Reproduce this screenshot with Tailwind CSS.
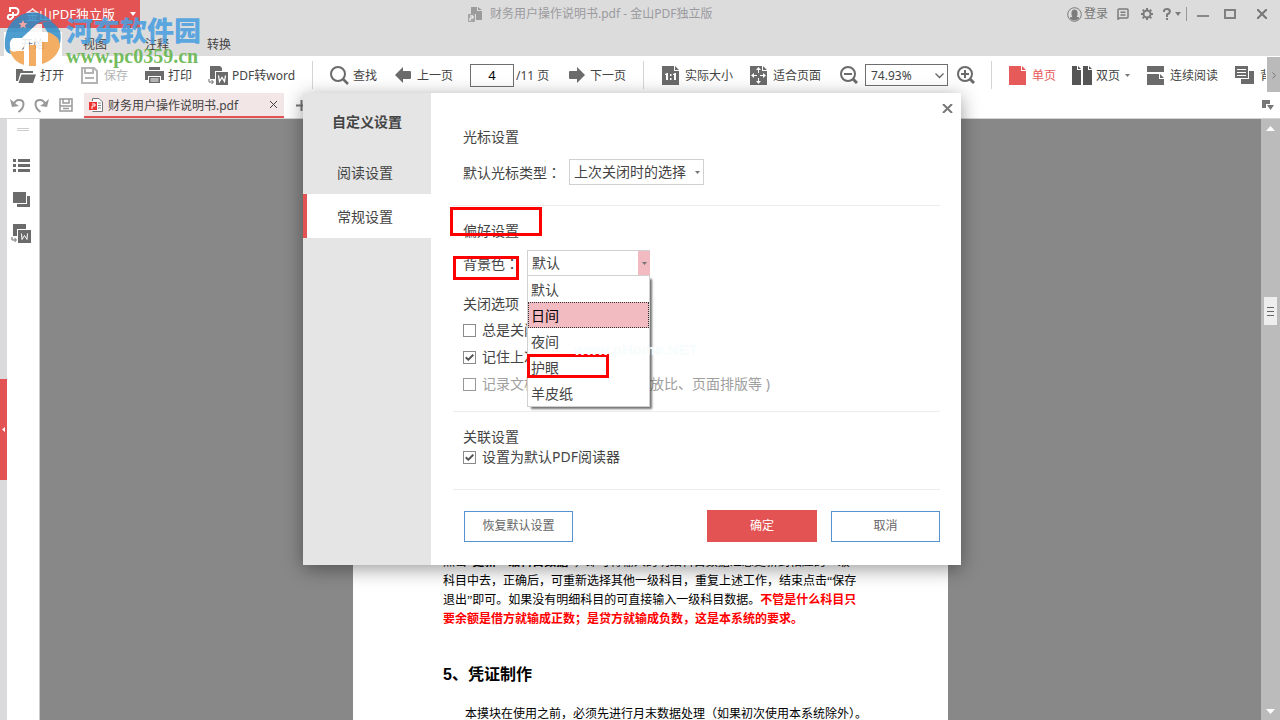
<!DOCTYPE html>
<html lang="zh-CN">
<head>
<meta charset="utf-8">
<meta name="viewport" content="width=device-width, initial-scale=1">
<title>财务用户操作说明书.pdf - 金山PDF独立版</title>
<script src="https://cdn.jsdelivr.net/npm/@tailwindcss/browser@4"></script>
</head>
<body class="relative flex h-screen flex-col overflow-hidden bg-[#888888] font-['Noto_Sans','Noto_Sans_CJK_SC',sans-serif] text-[12px] leading-4 text-[#444444]">

<!-- Title bar -->
<header class="shrink-0 bg-[#dcdcdc]">
  <div class="relative flex h-7 items-center justify-between">
    <button class="flex h-7 w-[140px] items-center bg-[#e35353] pl-[6px] text-[13px] text-white">
      <svg class="mr-[6px] size-[14px]" viewBox="0 0 14 14" fill="none" stroke="currentColor" stroke-width="2"><path d="M4 5V1h5a3.500 3.500 0 0 1 0 7H7v2M7 8H3a2 2 0 1 0 2 4l2-2V5"/></svg>
      <span>金山PDF独立版</span>
      <svg class="mr-1 ml-auto h-1 w-[6px]" viewBox="0 0 6 4" fill="currentColor"><path d="M0 0h6L3 4z"/></svg>
    </button>
    <h1 class="absolute left-[468px] flex items-center gap-[7px] text-[#9a9a9e]">
      <svg class="size-[15px]" viewBox="0 0 15 15"><path fill="#9b9b9b" d="M3 0h6v4h5v9H8V7H3zM10 0l4 3h-4z"/><path fill="#a5a5a5" d="M0 7h7v8H0z"/><path d="M2 9h3v2H2v3" fill="none" stroke="#fff"/></svg>
      <span>财务用户操作说明书.pdf - 金山PDF独立版</span>
    </h1>
    <div class="flex items-center pr-[13px] text-[#7b7b7b]">
      <button class="flex items-center gap-[2px]">
        <svg class="size-[15px]" viewBox="0 0 15 15" fill="none" stroke="currentColor"><circle cx="7.500" cy="7.500" r="6.800"/><path fill="currentColor" d="M5 5q0-2 2.500-2T10 5v3L9 10l3 1q-4.500 4-9 0l3-1-1-2z"/></svg>
        <span class="text-[#777]">登录</span>
      </button>
      <button class="ml-[9px]" aria-label="反馈"><svg class="size-3" viewBox="0 0 12 12" fill="none" stroke="currentColor" stroke-width="1.500"><path d="M1 11V2q0-1 1-1h8q1 0 1 1v7q0 1-1 1H3zM3.500 4.300h5M3.500 7h5"/></svg></button>
      <button class="ml-3" aria-label="设置"><svg class="size-3" viewBox="0 0 12 12" fill="none" stroke="currentColor"><circle cx="6" cy="6" r="3.500" stroke-width="2"/><path stroke-width="2" d="M6 0v2M6 10v2M0 6h2M10 6h2M1.700 1.700l1.300 1.300M9 9l1.300 1.300M1.700 10.300 3 9M9 3l1.300-1.300"/></svg></button>
      <button class="ml-[10px] flex items-center gap-1" aria-label="帮助"><svg class="h-3 w-2" viewBox="0 0 8 12" fill="none" stroke="currentColor" stroke-width="2"><path d="M1 4V2.500Q1.500 1 4 1t3 2.500Q7 5 4 6.500V9M4 10v2"/></svg><svg class="h-1 w-[6px]" viewBox="0 0 6 4" fill="currentColor"><path d="M0 0h6L3 4z"/></svg></button>
      <span class="ml-[5px] h-[14px] w-px bg-[#999]"></span>
      <button class="ml-[10px]" aria-label="最小化"><svg class="size-3" viewBox="0 0 12 12"><path fill="#888" d="M0 7h12v2H0z"/></svg></button>
      <button class="ml-[15px]" aria-label="最大化"><svg class="size-3" viewBox="0 0 12 12" fill="none" stroke="#808080" stroke-width="2"><path d="M1 2h10v8H1z"/></svg></button>
      <button class="ml-[21px]" aria-label="关闭"><svg class="size-[10px]" viewBox="0 0 10 10" stroke="#777" stroke-width="2"><path d="m0 0 10 10M10 0 0 10"/></svg></button>
    </div>
  </div>
  <nav class="flex h-7 items-end gap-1 pl-1">
    <a href="#" class="flex h-6 w-[58px] items-center justify-center bg-white pt-[2px] text-[#777]">开始</a>
    <a href="#" class="flex h-6 w-[58px] items-center justify-center pt-[2px]">视图</a>
    <a href="#" class="flex h-6 w-[58px] items-center justify-center pt-[2px]">注释</a>
    <a href="#" class="flex h-6 w-[58px] items-center justify-center pt-[2px]">转换</a>
  </nav>
</header>

<!-- Toolbar -->
<div class="flex h-9 shrink-0 items-center overflow-hidden bg-white pt-[2px] pl-4 leading-[18px] whitespace-nowrap">
  <button class="flex w-[65px] items-center gap-1">
    <svg class="h-[15px] w-5" viewBox="0 0 20 15" fill="#6b6b6b"><path d="M0 13V1h6l1.500 2H17v2H4.500L2 13zM5.500 6.500H20L17 15H2.500z"/></svg><span class="pt-[2px]">打开</span></button>
  <button class="flex w-16 items-center gap-[6px] text-[#b4b4b4]">
    <svg class="size-[17px]" viewBox="0 0 17 17" fill="none" stroke="currentColor" stroke-width="2"><path d="M1 1h12l3 3v12H1zM4 2v4h8V2M4 11h9"/></svg><span class="pt-[2px]">保存</span></button>
  <button class="flex w-[63px] items-center gap-1">
    <svg class="h-4 w-[19px]" viewBox="0 0 19 16"><path fill="#6b6b6b" d="M4 0h11v3H4zM0 4h19v9h-3V9H3v4H0zM4 10h11v6H4z"/><path stroke="#fff" d="M5.500 12h8M5.500 14h8"/></svg><span class="pt-[2px]">打印</span></button>
  <button class="flex w-[104px] items-center gap-1">
    <svg class="h-[19px] w-5" viewBox="0 0 20 19"><path fill="#6b6b6b" d="M2 0h10l2 2v3H7v8H2zM8 6h12v13H8z"/><path d="m10.500 9.500 1 6 2.500-4 2.500 4 1-6" fill="none" stroke="#fff" stroke-width="1.300"/><path d="M1 13v3h4M3.500 14l2 2-2 2" fill="none" stroke="#6b6b6b"/></svg><span class="pt-[2px]">PDF转word</span></button>
  <span class="h-7 w-px shrink-0 bg-[#d5d5d5]"></span>
  <button class="ml-[17px] flex w-[65px] shrink-0 items-center gap-1">
    <svg class="size-[19px]" viewBox="0 0 19 19" fill="none" stroke="#6b6b6b"><circle cx="8" cy="8" r="7" stroke-width="2"/><path stroke-width="2.500" d="m13 13 5 5"/></svg><span class="pt-[2px]">查找</span></button>
  <button class="flex w-[75px] shrink-0 items-center gap-[6px]">
    <svg class="size-4" viewBox="0 0 16 16" fill="#6b6b6b"><path d="M0 8 8 0v4h7q1 0 1 1v6q0 1-1 1H8v4z"/></svg><span class="pt-[2px]">上一页</span></button>
  <input type="text" value="4" aria-label="页码" class="h-[23px] w-11 shrink-0 border border-[#6f6f6f] bg-white text-center text-[13px] text-black">
  <span class="ml-[2px] w-[53px] shrink-0 pt-[2px]">/11 页</span>
  <button class="flex w-[74px] shrink-0 items-center gap-[5px]">
    <svg class="size-4" viewBox="0 0 16 16" fill="#6b6b6b"><path d="M16 8 8 0v4H1Q0 4 0 5v6q0 1 1 1h7v4z"/></svg><span class="pt-[2px]">下一页</span></button>
  <span class="h-7 w-px shrink-0 bg-[#d5d5d5]"></span>
  <button class="ml-[18px] flex w-[88px] shrink-0 items-center gap-[6px]">
    <svg class="h-[19px] w-[17px]" viewBox="0 0 17 19"><path fill="#6b6b6b" d="M0 0h12v5h5v14H0zM13 0l4 4h-4z"/><path fill="#fff" d="M3 8l2-1h1v7H4V9H3zM8 8h1.500v2H8zM8 12h1.500v2H8zM11 8l2-1h1v7h-2V9h-1z"/></svg><span class="pt-[2px]">实际大小</span></button>
  <button class="flex w-[90px] shrink-0 items-center gap-[6px]">
    <svg class="h-[19px] w-[17px]" viewBox="0 0 17 19"><path fill="#6b6b6b" d="M0 0h12v5h5v14H0zM13 0l4 4h-4z"/><path fill="#fff" d="M8.500 1 11 4H9v3H8V4H6zM8.500 18 6 15h2v-3h1v3h2zM1 9.500 4 7v2h3v1H4v2zM16 9.500 13 12v-2h-3V9h3V7z"/></svg><span class="pt-[2px]">适合页面</span></button>
  <button class="shrink-0" aria-label="缩小"><svg class="size-[18px]" viewBox="0 0 18 18" fill="none" stroke="#6b6b6b" stroke-width="2"><circle cx="8" cy="8" r="7"/><path d="M4 8h8"/><path stroke-width="3" d="m13 13 4 4"/></svg></button>
  <div class="relative ml-[7px] shrink-0">
    <select aria-label="缩放比例" class="block h-[22px] w-[83px] appearance-none border border-[#6f6f6f] bg-white pt-px pl-[5px] text-[12px]"><option>74.93%</option></select>
    <svg class="pointer-events-none absolute top-[9px] right-1 h-[6px] w-[9px]" viewBox="0 0 9 6" fill="none" stroke="#666" stroke-width="1.300"><path d="m.5.500 4 4 4-4"/></svg>
  </div>
  <button class="ml-[9px] shrink-0" aria-label="放大"><svg class="size-[18px]" viewBox="0 0 18 18" fill="none" stroke="#6b6b6b" stroke-width="2"><circle cx="8" cy="8" r="7"/><path d="M4 8h8M8 4v8"/><path stroke-width="3" d="m13 13 4 4"/></svg></button>
  <span class="ml-4 h-7 w-px shrink-0 bg-[#d5d5d5]"></span>
  <button class="ml-[17px] flex w-[63px] shrink-0 items-center gap-[6px] text-[#e65a5a]">
    <svg class="h-[19px] w-[17px]" viewBox="0 0 17 19" fill="currentColor"><path d="M0 0h12v5h5v14H0zM13 0l4 4h-4z"/></svg><span class="pt-[2px]">单页</span></button>
  <button class="flex w-[75px] shrink-0 items-center gap-1">
    <svg class="h-[19px] w-5" viewBox="0 0 20 19" fill="#555"><path d="M0 0h5v4h4v15H0zM6 0l3 3H6zM11 0h5v4h4v15h-9zM17 0l3 3h-3z"/></svg><span class="pt-[2px]">双页</span>
    <svg class="ml-px h-[3px] w-[5px]" viewBox="0 0 5 3" fill="#777"><path d="M0 0h5L2.500 3z"/></svg></button>
  <button class="flex w-[88px] shrink-0 items-center gap-[6px]">
    <svg class="h-[19px] w-[17px]" viewBox="0 0 17 19" fill="#6b6b6b"><path d="M0 0h17v6H0zM0 8h12v5h5v6H0zM13 8l4 4h-4z"/></svg><span class="pt-[2px]">连续阅读</span></button>
  <button class="flex min-w-0 flex-1 items-center gap-[6px] overflow-hidden">
    <svg class="h-[18px] w-[19px] shrink-0" viewBox="0 0 19 18"><path fill="#6b6b6b" d="M0 0h13v12H0zM14 5h5v13H6v-5h8z"/><path stroke="#fff" d="M2 3.500h9M2 6.500h9M2 9.500h9"/></svg><span class="w-[6px] overflow-hidden pt-[2px]">背景</span></button>
  <button class="flex h-9 w-[13px] shrink-0 items-center justify-center bg-[#bababa]" aria-label="更多"><svg class="h-[7px] w-1" viewBox="0 0 4 7" fill="none" stroke="#777"><path d="m.5.500 3 3-3 3"/></svg></button>
</div>

<!-- Document tabs -->
<div class="flex h-[27px] shrink-0 items-center border-b border-[#d4d4d4] bg-white pl-[10px] text-[#999]">
  <button aria-label="撤销"><svg class="size-[15px]" viewBox="0 0 15 15" fill="none" stroke="currentColor" stroke-width="2"><path d="M3.500 7Q5 2 9 2q4.500 0 4.500 4 0 4.500-5 8"/><path fill="currentColor" stroke="none" d="M0 1 2 9l7-1-3-2z"/></svg></button>
  <button class="ml-[9px]" aria-label="重做"><svg class="size-[15px]" viewBox="0 0 15 15" fill="none" stroke="currentColor" stroke-width="2"><path d="M11.500 7Q10 2 6 2 1.500 2 1.500 6q0 4.500 5 8"/><path fill="currentColor" stroke="none" d="m15 1-2 8-7-1 3-2z"/></svg></button>
  <button class="ml-[10px]" aria-label="保存"><svg class="size-[14px]" viewBox="0 0 14 14" fill="none" stroke="currentColor" stroke-width="1.500"><path d="M1 1h12v12H1zM4 1v4h6V1M1 8h12M4 10.500h6"/></svg></button>
  <div class="ml-[11px] flex h-[25px] w-[200px] items-center self-end border-b-2 border-[#e35353] bg-[#f2e6e6] pl-[5px] text-[#444]">
    <svg class="mr-[5px] size-[14px]" viewBox="0 0 14 14"><path d="M3.500 3V.5H10L13.500 4v9.500h-10" fill="#fff" stroke="#777"/><path d="M9 5h3M9 7.500h3M9 10h3" stroke="#888"/><path fill="#e33" d="M0 4h8v8H0z"/><path d="M3 6h3v2H3v3" fill="none" stroke="#fff"/></svg>
    <a href="#" class="pt-[2px]">财务用户操作说明书.pdf</a>
    <button class="mr-[7px] ml-auto" aria-label="关闭标签"><svg class="size-[7px]" viewBox="0 0 7 7" stroke="#444"><path d="m0 0 7 7M7 0 0 7"/></svg></button>
  </div>
  <button class="ml-3" aria-label="新建标签"><svg class="size-[11px]" viewBox="0 0 11 11" stroke="#777" stroke-width="2"><path d="M5.500 0v11M0 5.500h11"/></svg></button>
  <button class="mr-[6px] ml-auto" aria-label="标签列表"><svg class="h-[10px] w-3" viewBox="0 0 12 10" fill="#777"><path d="M0 0h8v4H4v4H0zM5 5h7L8.500 10z"/></svg></button>
</div>

<!-- Workspace -->
<main class="flex min-h-0 flex-1">
  <div class="flex w-[7px] flex-col bg-[#dadadc] pt-[260px]">
    <button class="flex h-[101px] items-center justify-center bg-[#e35353]" aria-label="展开侧栏"><svg class="h-[5px] w-[3px]" viewBox="0 0 3 5" fill="#fff"><path d="M3 0v5L0 2.500z"/></svg></button>
  </div>
  <aside class="flex w-[33px] flex-col items-center border-r border-[#ccc] bg-white pt-[9px]">
    <span class="h-[3px] w-3 border-y border-[#ccc]"></span>
    <button class="mt-7 mr-1" aria-label="目录"><svg class="h-[13px] w-[17px]" viewBox="0 0 17 13" fill="#6b6b6b"><path d="M0 0h3v3H0zM5 0h12v3H5zM0 5h3v3H0zM5 5h12v3H5zM0 10h3v3H0zM5 10h12v3H5z"/></svg></button>
    <button class="mt-5 mr-1" aria-label="缩略图"><svg class="h-[15px] w-[17px]" viewBox="0 0 17 15" fill="#6b6b6b"><path d="M0 0h13v11H0zM14 4h3v11H4v-3h10z"/></svg></button>
    <button class="mt-[17px] mr-1" aria-label="转换为Word"><svg class="h-[19px] w-5" viewBox="0 0 20 19"><path fill="#6b6b6b" d="M2 0h13v5H6v7H2zM7 6h13v13H7z"/><path d="m10.500 9.500.5 6 2.500-4 2.500 4 .5-6" fill="none" stroke="#fff"/><path d="M1 13v3h4M3.500 14l2 2-2 2" fill="none" stroke="#6b6b6b"/></svg></button>
  </aside>
  <div class="flex min-w-0 flex-1 justify-center overflow-hidden" id="doc">
    <article class="w-[595px] bg-white px-[90px] pt-[434px] font-['Liberation_Serif','Noto_Sans_CJK_SC',serif] leading-[19px] whitespace-nowrap text-black">
      <p>点击“<b>更新一级科目数据</b>”，即可将输入的明细科目数据汇总更新到相应的一级<br>科目中去，正确后，可重新选择其他一级科目，重复上述工作，结束点击“保存<br>退出”即可。如果没有明细科目的可直接输入一级科目数据。<strong class="text-[#ff0000]">不管是什么科目只<br>要余额是借方就输成正数；是贷方就输成负数，这是本系统的要求。</strong></p>
      <h2 class="mt-9 font-['Liberation_Sans','Noto_Sans_CJK_SC',sans-serif] text-[16px] leading-5 font-bold">5、凭证制作</h2>
      <p class="mt-5 pl-[22px]">本摸块在使用之前，必须先进行月末数据处理（如果初次使用本系统除外）。</p>
    </article>
  </div>
  <div class="flex w-[19px] flex-col items-center bg-[#bbbbbb] pt-[7px] pb-[6px]" role="scrollbar" aria-orientation="vertical" aria-controls="doc" aria-valuenow="30">
    <svg class="h-[5px] w-[9px]" viewBox="0 0 9 5" fill="#fff"><path d="M0 5h9L4.500 0z"/></svg>
    <div class="mt-[166px] flex h-7 w-[13px] flex-col items-center justify-center gap-[3px] bg-[#eeeeee]"><i class="h-px w-[7px] bg-[#666]"></i><i class="h-px w-[7px] bg-[#666]"></i><i class="h-px w-[7px] bg-[#666]"></i></div>
    <svg class="mt-auto h-[5px] w-[9px]" viewBox="0 0 9 5" fill="#fff"><path d="M0 0h9L4.500 5z"/></svg>
  </div>
</main>

<!-- Settings dialog -->
<div role="dialog" aria-label="自定义设置" class="absolute top-[93px] left-[303px] z-10 flex w-[658px] bg-white text-[14px] leading-5 shadow-[0_4px_18px_rgba(0,0,0,0.4)]">
  <nav class="w-32 shrink-0 bg-[#e5e5e5] pt-[19px]">
    <h2 class="mb-[18px] text-center font-bold">自定义设置</h2>
    <a href="#" class="flex h-11 items-center pt-px pl-[34px]">阅读设置</a>
    <a href="#" class="flex h-11 items-center border-l-4 border-[#e35353] bg-white pt-px pl-[30px]">常规设置</a>
  </nav>
  <form class="relative min-w-0 flex-1 pr-[21px] pb-[23px] pl-[22px]">
    <button type="button" class="absolute top-[11px] right-2" aria-label="关闭"><svg class="h-[9px] w-[11px]" viewBox="0 0 11 9" stroke="#777" stroke-width="2"><path d="m1 0 9 9M10 0 1 9"/></svg></button>

    <section class="border-b border-[#ececec] pt-[34px] pb-5 pl-[10px]">
      <h3>光标设置</h3>
      <div class="mt-3 flex items-center">
        <label for="cursor" class="w-[106px]">默认光标类型<span class="font-['Noto_Sans_CJK_TC',sans-serif]" lang="zh-TW">：</span></label>
        <div class="relative">
          <select id="cursor" class="block h-[26px] w-[135px] appearance-none border border-[#d0d0d0] bg-white pl-1"><option>上次关闭时的选择</option></select>
          <svg class="pointer-events-none absolute top-3 right-1 h-[3px] w-[5px]" viewBox="0 0 5 3" fill="#777"><path d="M0 0h5L2.500 3z"/></svg>
        </div>
      </div>
    </section>

    <section class="border-b border-[#ececec] pt-[15px] pb-[17px] pl-[10px]">
      <h3>偏好设置</h3>
      <div class="mt-[9px] flex items-center">
        <label for="bg" class="w-16">背景色<span class="font-['Noto_Sans_CJK_TC',sans-serif]" lang="zh-TW">：</span></label>
        <div class="relative z-10">
          <select id="bg" class="block h-[26px] w-[123px] appearance-none border border-[#d0d0d0] bg-white pl-1"><option>默认</option><option>日间</option><option>夜间</option><option>护眼</option><option>羊皮纸</option></select>
          <span class="pointer-events-none absolute top-px right-0 flex h-6 w-3 items-center justify-center bg-[#f2bac1]"><svg class="h-[3px] w-[5px]" viewBox="0 0 5 3" fill="#777"><path d="M0 0h5L2.500 3z"/></svg></span>
          <ul role="listbox" aria-label="背景色选项" class="absolute top-[25px] left-0 w-[123px] border border-[#d0d0d0] bg-white leading-[28px] shadow-[3px_3px_2px_-1px_rgba(0,0,0,0.55)]">
            <li role="option" class="h-[26px] pl-[3px]">默认</li>
            <li role="option" aria-selected="true" class="h-[26px] border border-dotted border-[#333] bg-[#f2bac1] pl-[2px] leading-[26px] text-black">日间</li>
            <li role="option" class="h-[26px] pl-[3px]">夜间</li>
            <li role="option" class="h-[26px] pl-[3px]">护眼</li>
            <li role="option" class="h-[26px] pl-[3px]">羊皮纸</li>
          </ul>
        </div>
      </div>
      <h3 class="mt-[18px]">关闭选项</h3>
      <div class="mt-[6px] flex flex-col gap-[7px]">
        <label class="flex items-center gap-[6px]"><input type="checkbox" class="size-[13px] appearance-none border border-[#8a8a8a] bg-white">总是关闭</label>
        <label class="relative flex items-center gap-[6px]"><input type="checkbox" checked class="size-[13px] appearance-none border border-[#8a8a8a] bg-white"><svg class="pointer-events-none absolute left-[2px] h-[7px] w-[9px]" viewBox="0 0 9 7" fill="none" stroke="#555" stroke-width="2"><path d="m.7 3.300 2.600 2.400L8.300.700"/></svg>记住上次选择</label>
        <label class="flex items-center gap-[6px] text-[#a0a0a0]"><input type="checkbox" class="size-[13px] appearance-none border border-[#999] bg-white">记录文档阅读状态（页码缩放比、页面排版等 )</label>
      </div>
    </section>

    <section class="border-b border-[#ececec] pt-[15px] pb-[22px] pl-[10px]">
      <h3>关联设置</h3>
      <label class="relative flex items-center gap-[6px]"><input type="checkbox" checked class="size-[13px] appearance-none border border-[#8a8a8a] bg-white"><svg class="pointer-events-none absolute left-[2px] h-[7px] w-[9px]" viewBox="0 0 9 7" fill="none" stroke="#555" stroke-width="2"><path d="m.7 3.300 2.600 2.400L8.300.700"/></svg>设置为默认PDF阅读器</label>
    </section>

    <div class="flex pt-5 pl-[11px] text-[12px] text-[#666]">
      <button type="button" class="mt-px h-[31px] w-[109px] border border-[#5592cf] bg-white pb-px">恢复默认设置</button>
      <button type="submit" class="ml-auto h-8 w-[110px] bg-[#e35353] text-white">确定</button>
      <button type="button" class="mt-px ml-[14px] h-[31px] w-[109px] border border-[#5592cf] bg-white pb-px">取消</button>
    </div>
  </form>
</div>

<!-- Highlight frames -->
<div class="pointer-events-none absolute top-[207px] left-[450px] z-20 h-[29px] w-[92px] border-3 border-[#ff0000]"></div>
<div class="pointer-events-none absolute top-[256px] left-[453px] z-20 h-6 w-[66px] border-3 border-[#ff0000]"></div>
<div class="pointer-events-none absolute top-[354px] left-[527px] z-20 h-6 w-[82px] border-3 border-[#ff0000]"></div>
<span class="pointer-events-none absolute top-[342px] left-[574px] z-20 font-['Liberation_Sans',sans-serif] text-[15px] font-bold whitespace-nowrap text-[#f7fdfd]">www.pHome.NET</span>

<!-- Site watermark -->
<div class="pointer-events-none absolute top-[11px] left-1 z-20 flex">
  <svg class="h-[56px] w-[58px]" viewBox="0 0 58 56" opacity=".85">
    <path fill="#2f8cc8" d="M1 37Q-1 14 17 4 34-4 49 11q-9-3-16 2L18 27H9q-4 3-3 8 0 4 1 8-5-1-6-6z"/>
    <path fill="#2f8cc8" d="M38 12q10-6 18 8 2 8-1 15-2-12-11-13z"/>
    <path fill="#f3a04a" d="M5 38q3 4 8 2h7v14Q9 51 5 38zM25 34h7v21h-7zM38 30h6v-9q12 4 12 14Q53 48 38 53z"/>
    <path fill="#fff" d="M9 27h9L33 13h5v14h6v4h-6v22l-6 2V31h-7v24l-5-1V36h-8q-4-4-3-9z"/>
    <path fill="#f6b4b0" d="m19 9 1.300 3 3 .3-2.300 2 .7 3-2.700-1.500-2.700 1.500.7-3-2.300-2 3-.3z"/>
  </svg>
  <div class="pt-[3px] pl-1 whitespace-nowrap">
    <div class="font-['Noto_Sans_CJK_SC',sans-serif] text-[27px] leading-8 font-black text-[#4a9fe0]/90">河东软件园</div>
    <div class="font-['Liberation_Serif',serif] text-[20px] leading-5 font-bold text-[#6bb854]/95">www.pc0359.cn</div>
  </div>
</div>
</body>
</html>
